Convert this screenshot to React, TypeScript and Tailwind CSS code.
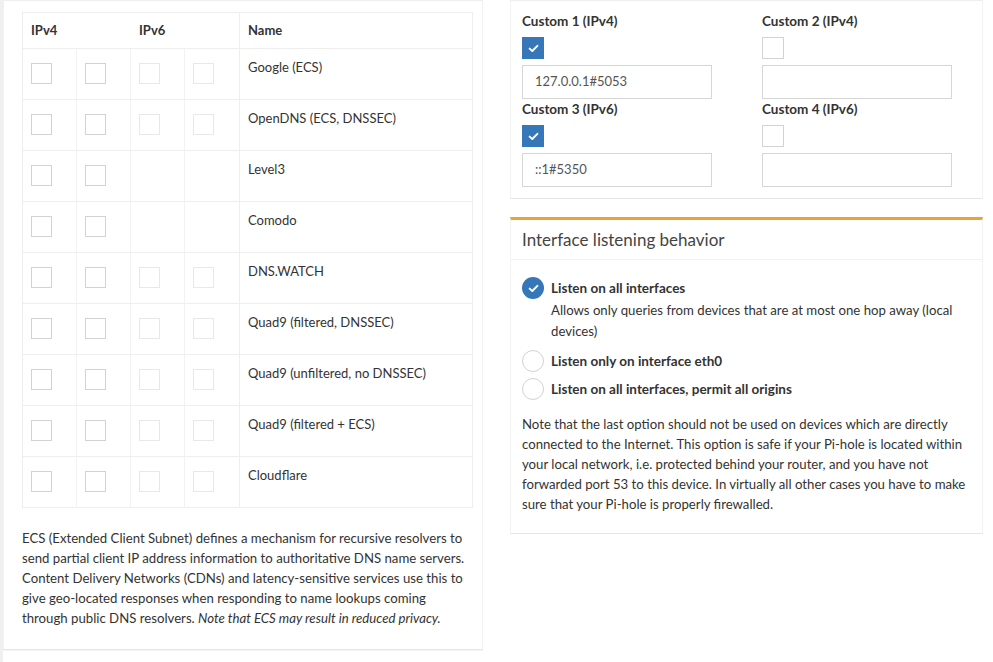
import React from 'react';

const FONT = { fontFamily: 'Lato, "Noto Sans", sans-serif' };

const servers = [
  { name: 'Google (ECS)', v6: true },
  { name: 'OpenDNS (ECS, DNSSEC)', v6: true },
  { name: 'Level3', v6: false },
  { name: 'Comodo', v6: false },
  { name: 'DNS.WATCH', v6: true },
  { name: 'Quad9 (filtered, DNSSEC)', v6: true },
  { name: 'Quad9 (unfiltered, no DNSSEC)', v6: true },
  { name: 'Quad9 (filtered + ECS)', v6: true },
  { name: 'Cloudflare', v6: true },
];

function Box({ light }: { light?: boolean }) {
  return (
    <div
      className={
        'w-[21px] h-[21px] bg-white border ' +
        (light ? 'border-[#e8e8e8]' : 'border-[#d2d2d2]')
      }
    />
  );
}

function Tick() {
  return (
    <svg width="11" height="9" viewBox="0 0 11 9">
      <path d="M1.6 4.6 L4.3 7 L9.4 1.8" fill="none" stroke="white" strokeWidth="1.9" strokeLinecap="round" strokeLinejoin="round" />
    </svg>
  );
}

function Check({ on }: { on?: boolean }) {
  if (!on) return <div className="w-[22px] h-[22px] bg-white border border-[#d2d2d2]" />;
  return (
    <div className="w-[22px] h-[22px] bg-[#3677b9] flex items-center justify-center">
      <Tick />
    </div>
  );
}

function Radio({ on }: { on?: boolean }) {
  if (!on) return <div className="w-[22px] h-[22px] rounded-full bg-white border border-[#d2d2d2] shrink-0" />;
  return (
    <div className="w-[22px] h-[22px] rounded-full bg-[#3677b9] flex items-center justify-center shrink-0">
      <Tick />
    </div>
  );
}

function Custom({ label, on, value }: { label: string; on?: boolean; value?: string }) {
  return (
    <div className="w-[240px] shrink-0">
      <div className="h-[20px] leading-[20px] text-[13.5px] font-bold text-[#333]">{label}</div>
      <div className="mt-[6px]">
        <Check on={on} />
      </div>
      <div className="mt-[6px] w-[190px] h-[34px] border border-[#d6d6d6] bg-white px-[12px] flex items-center text-[13px] text-[#555]">
        {value}
      </div>
    </div>
  );
}

export default function App() {
  return (
    <div className="min-h-[662px] bg-white border-l-[3px] border-[#f0f0f0] text-[#333]" style={FONT}>
      <div className="flex gap-[27px] items-start">
        {/* left box */}
        <div className="w-[480px] border border-t-[#eeeeee] border-x-[#f2f2f2] border-b-[#e6e6e6] shadow-[0_1px_1px_rgba(0,0,0,0.04)] bg-white pt-[11px] pb-[21px] pl-[18px]">
          <div className="w-[451px] border border-[#eeeeee] text-[13px]">
            <div className="flex h-[35px] font-bold items-center">
              <div className="w-[108px] pl-[8px]">IPv4</div>
              <div className="w-[109px] pl-[8px] self-stretch flex items-center border-r border-[#eeeeee]">IPv6</div>
              <div className="flex-1 pl-[8px]">Name</div>
            </div>
            {servers.map((s) => (
              <div key={s.name} className="flex h-[51px] border-t border-[#eeeeee]">
                <div className="w-[54px] pl-[8px] pt-[14px] border-r border-[#f2f2f2]">
                  <Box />
                </div>
                <div className="w-[54px] pl-[8px] pt-[14px] border-r border-[#f2f2f2]">
                  <Box />
                </div>
                <div className="w-[54px] pl-[8px] pt-[14px] border-r border-[#f2f2f2]">
                  {s.v6 && <Box light />}
                </div>
                <div className="w-[55px] pl-[8px] pt-[14px] border-r border-[#eeeeee]">
                  {s.v6 && <Box light />}
                </div>
                <div className="flex-1 pl-[8px] pt-[8px] leading-[20px]">{s.name}</div>
              </div>
            ))}
          </div>
          <p className="mt-[20px] text-[13.2px] leading-[20px] whitespace-nowrap">
            ECS (Extended Client Subnet) defines a mechanism for recursive resolvers to
            <br />
            send partial client IP address information to authoritative DNS name servers.
            <br />
            Content Delivery Networks (CDNs) and latency-sensitive services use this to
            <br />
            give geo-located responses when responding to name lookups coming
            <br />
            through public DNS resolvers. <em>Note that ECS may result in reduced privacy.</em>
          </p>
        </div>

        {/* right column */}
        <div className="w-[473px] flex flex-col gap-[18px]">
          <div className="border border-t-[#eeeeee] border-x-[#f2f2f2] border-b-[#e6e6e6] bg-white pl-[11px] pt-[10px] pb-[11px]">
            <div className="flex">
              <Custom label="Custom 1 (IPv4)" on value="127.0.0.1#5053" />
              <Custom label="Custom 2 (IPv4)" />
            </div>
            <div className="flex">
              <Custom label="Custom 3 (IPv6)" on value="::1#5350" />
              <Custom label="Custom 4 (IPv6)" />
            </div>
          </div>

          <div className="border-t-[3px] border-t-[#e8a531] border-x border-x-[#f2f2f2] border-b border-b-[#e6e6e6] bg-white">
            <div className="h-[40px] pl-[11px] flex items-center border-b border-[#f2f2f2] text-[17px] text-[#444]">
              Interface listening behavior
            </div>
            <div className="pl-[11px] pt-[17px] pb-[19px] text-[13.2px]">
              <div className="flex gap-[7px]">
                <Radio on />
                <div>
                  <div className="leading-[20px] mt-[1px] font-bold text-[13.5px]">Listen on all interfaces</div>
                  <div className="leading-[21px] mt-[2px] whitespace-nowrap">
                    Allows only queries from devices that are at most one hop away (local
                    <br />
                    devices)
                  </div>
                </div>
              </div>
              <div className="flex gap-[7px] items-center mt-[8px] h-[22px]">
                <Radio />
                <div className="font-bold leading-[20px] text-[13.5px]">Listen only on interface eth0</div>
              </div>
              <div className="flex gap-[7px] items-center mt-[6px] h-[22px]">
                <Radio />
                <div className="font-bold leading-[20px] text-[13.5px]">Listen on all interfaces, permit all origins</div>
              </div>
              <p className="mt-[14px] leading-[20px] whitespace-nowrap">
                Note that the last option should not be used on devices which are directly
                <br />
                connected to the Internet. This option is safe if your Pi-hole is located within
                <br />
                your local network, i.e. protected behind your router, and you have not
                <br />
                forwarded port 53 to this device. In virtually all other cases you have to make
                <br />
                sure that your Pi-hole is properly firewalled.
              </p>
            </div>
          </div>
        </div>
      </div>
    </div>
  );
}
